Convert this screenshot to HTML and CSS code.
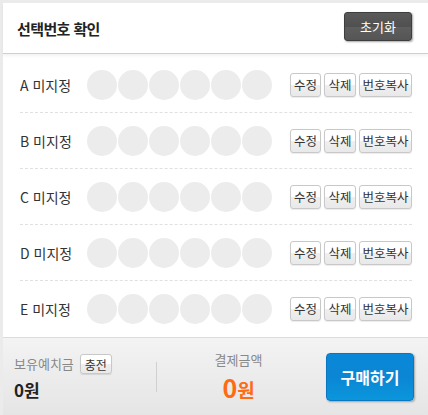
FILE: index.html
```html
<!DOCTYPE html>
<html lang="ko">
<head>
<meta charset="utf-8">
<link rel="stylesheet" href="styles.css">
</head>
<body>
<div class="panel">
  <div class="header">
    <h1 class="title">선택번호 확인</h1>
    <button class="reset">초기화</button>
  </div>
  <div class="list">
    <div class="row">
      <span class="label">A 미지정</span>
      <div class="balls"><i></i><i></i><i></i><i></i><i></i><i></i></div>
      <div class="actions"><button class="btn edit">수정</button><button class="btn del">삭제</button><button class="btn copy">번호복사</button></div>
    </div>
    <div class="row">
      <span class="label">B 미지정</span>
      <div class="balls"><i></i><i></i><i></i><i></i><i></i><i></i></div>
      <div class="actions"><button class="btn edit">수정</button><button class="btn del">삭제</button><button class="btn copy">번호복사</button></div>
    </div>
    <div class="row">
      <span class="label">C 미지정</span>
      <div class="balls"><i></i><i></i><i></i><i></i><i></i><i></i></div>
      <div class="actions"><button class="btn edit">수정</button><button class="btn del">삭제</button><button class="btn copy">번호복사</button></div>
    </div>
    <div class="row">
      <span class="label">D 미지정</span>
      <div class="balls"><i></i><i></i><i></i><i></i><i></i><i></i></div>
      <div class="actions"><button class="btn edit">수정</button><button class="btn del">삭제</button><button class="btn copy">번호복사</button></div>
    </div>
    <div class="row last">
      <span class="label">E 미지정</span>
      <div class="balls"><i></i><i></i><i></i><i></i><i></i><i></i></div>
      <div class="actions"><button class="btn edit">수정</button><button class="btn del">삭제</button><button class="btn copy">번호복사</button></div>
    </div>
  </div>
  <div class="footer">
    <div class="deposit">
      <div class="dep-top"><span class="muted">보유예치금</span><button class="charge">충전</button></div>
      <div class="dep-amount">0원</div>
    </div>
    <div class="divider"></div>
    <div class="pay">
      <div class="muted">결제금액</div>
      <div class="pay-amount"><span class="num">0</span><span class="won">원</span></div>
    </div>
    <button class="buy">구매하기</button>
  </div>
</div>
</body>
</html>
```
FILE: styles.css
```css
* { box-sizing: border-box; }
html, body { margin: 0; padding: 0; }
body {
  background: #ebebeb;
  font-family: "Noto Sans CJK KR", "Noto Sans", sans-serif;
  width: 428px;
  height: 415px;
  overflow: hidden;
}
button { font-family: inherit; cursor: pointer; }
.panel {
  margin: 3px 0 0 3px;
  background: #fff;
  height: 412px;
  display: flex;
  flex-direction: column;
}
.header {
  height: 51px;
  border-bottom: 1px solid #cfcfcf;
  box-shadow: 0 2px 3px rgba(0,0,0,0.05);
  display: flex;
  align-items: center;
  justify-content: space-between;
  padding: 0 16px 0 14px;
  flex: none;
}
.title {
  margin: 0;
  font-size: 15px;
  font-weight: 700;
  color: #222;
  letter-spacing: -0.6px;
}
.reset {
  width: 68px;
  height: 29px;
  margin-bottom: 4px;
  border: 1px solid #3e3e3e;
  border-radius: 3px;
  background: linear-gradient(#5a5a5a 0%, #505050 50%, #5e5e5e 51%, #555 100%);
  color: #fff;
  font-size: 13px;
  box-shadow: 1px 1px 2px rgba(0,0,0,0.35);
  padding: 0;
}
.list {
  padding: 3px 16px 0 17px;
  flex: none;
}
.row {
  height: 56px;
  display: flex;
  align-items: center;
  border-bottom: 1px dashed #e0e0e0;
}
.row.last { border-bottom: none; }
.label {
  width: 67px;
  font-size: 14px;
  color: #333;
  flex: none;
}
.balls {
  display: flex;
  gap: 1px;
}
.balls i {
  width: 30px;
  height: 30px;
  border-radius: 50%;
  background: #ececec;
  display: block;
}
.actions {
  margin-left: auto;
  display: flex;
  gap: 3px;
}
.btn {
  height: 24px;
  padding: 0;
  font-size: 12.5px;
  color: #333;
  border: 1px solid #c8c8c8;
  border-radius: 3px;
  background: linear-gradient(#fff 0%, #fff 50%, #efefef 51%, #e9e9e9 100%);
  box-shadow: 0 1px 1px rgba(0,0,0,0.08);
  line-height: 22px;
}
.btn.edit { width: 31px; }
.btn.del { width: 32px; }
.btn.copy { width: 53px; }
.footer {
  flex: 1;
  border-top: 1px solid #dcdcdc;
  background: linear-gradient(#f3f3f3, #e5e5e5);
  display: flex;
  align-items: center;
  padding: 0 14px 0 11px;
}
.deposit {
  width: 142px;
  display: flex;
  flex-direction: column;
  gap: 5px;
  padding-top: 2px;
}
.dep-top { display: flex; align-items: center; }
.muted { font-size: 13px; color: #888; line-height: 18px; }
.charge {
  margin-left: 6px;
  width: 32px;
  height: 20px;
  padding: 0;
  font-size: 12px;
  color: #333;
  border: 1px solid #c8c8c8;
  border-radius: 3px;
  background: linear-gradient(#fff 50%, #eee 51%, #e9e9e9);
  box-shadow: 0 1px 1px rgba(0,0,0,0.1);
}
.dep-amount {
  font-size: 17px;
  font-weight: 700;
  color: #222;
  line-height: 22px;
}
.divider {
  width: 1px;
  height: 30px;
  background: #d0d0d0;
  margin-top: 1px;
}
.pay {
  flex: 1;
  padding-right: 6px;
  display: flex;
  flex-direction: column;
  align-items: center;
  gap: 6px;
}
.pay-amount {
  color: #ff6a13;
  font-weight: 700;
  line-height: 24px;
  white-space: nowrap;
}
.pay-amount .num { font-size: 25px; }
.pay-amount .won { font-size: 19px; }
.buy {
  width: 88px;
  height: 48px;
  padding: 0;
  border: 1px solid #0a77c0;
  border-radius: 4px;
  background: linear-gradient(#0a88d8 0%, #0a86d4 50%, #0b96dc 100%);
  color: #fff;
  font-size: 16px;
  font-weight: 700;
  box-shadow: 1px 1px 2px rgba(0,0,0,0.3);
}
```
